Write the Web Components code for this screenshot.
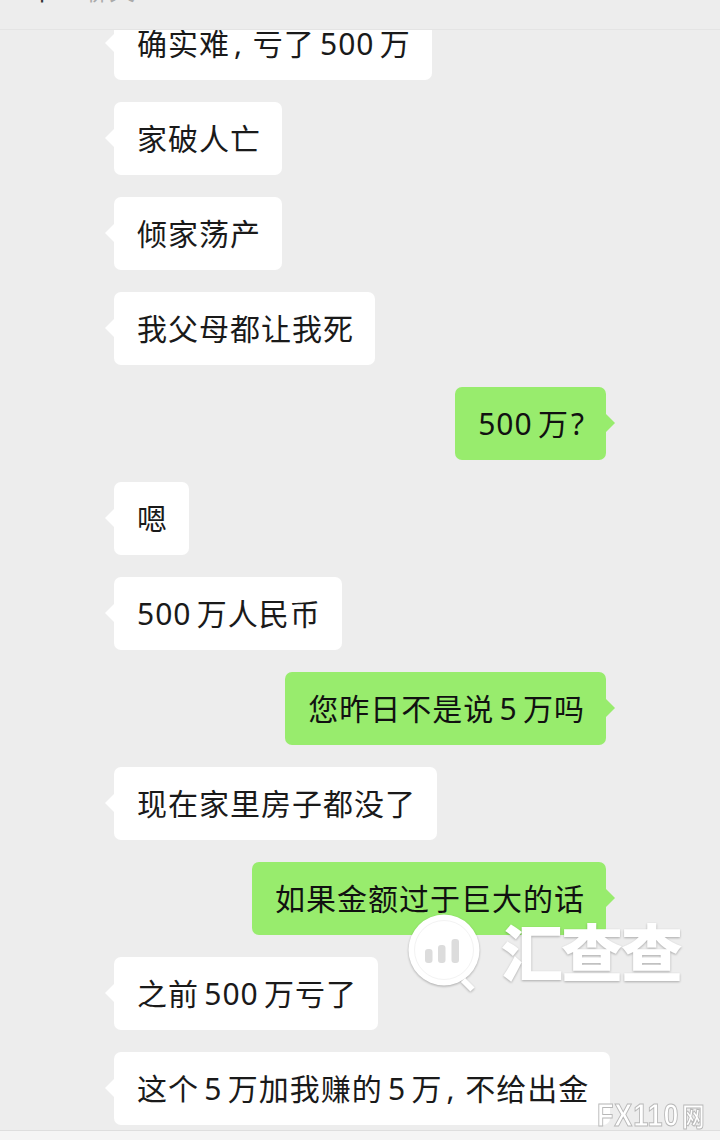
<!DOCTYPE html>
<html lang="zh">
<head>
<meta charset="utf-8">
<title>chat</title>
<style>
    html, body { margin: 0; padding: 0; background: #ededed; }
    body { width: 720px; height: 1140px; overflow: hidden; position: relative; font-family: 'Noto Sans', 'Noto Sans CJK SC', sans-serif; }
    .comma { margin: 0 4.4px 0 4px; }
    .ask { margin-left: 2px; }
</style>
</head>
<body>
<chat-page>
    <chat-header slot="header"></chat-header>
    <chat-bubble>确实难<span class="comma">,</span> 亏了 500 万</chat-bubble>
    <chat-bubble>家破人亡</chat-bubble>
    <chat-bubble>倾家荡产</chat-bubble>
    <chat-bubble>我父母都让我死</chat-bubble>
    <chat-bubble mine>500 万<span class="ask">?</span></chat-bubble>
    <chat-bubble>嗯</chat-bubble>
    <chat-bubble>500 万人民币</chat-bubble>
    <chat-bubble mine>您昨日不是说 5 万吗</chat-bubble>
    <chat-bubble>现在家里房子都没了</chat-bubble>
    <chat-bubble mine>如果金额过于巨大的话</chat-bubble>
    <chat-bubble>之前 500 万亏了</chat-bubble>
    <chat-bubble>这个 5 万加我赚的 5 万<span class="comma">,</span> 不给出金</chat-bubble>
</chat-page>
<logo-watermark></logo-watermark>
<fx-mark></fx-mark>
<script>
class ChatPage extends HTMLElement {
    constructor() {
        super();
        this.attachShadow({ mode: 'open' });
        this.shadowRoot.innerHTML = `
            <style>
                :host { display: flex; flex-direction: column; height: 1140px; }
                .list {
                    flex: 1;
                    min-height: 0;
                    overflow: hidden;
                }
                .inner {
                    display: flex;
                    flex-direction: column;
                    gap: 22px;
                    margin-top: -23px;
                }
                .foot {
                    height: 9px;
                    flex: none;
                    background: #f5f5f5;
                    border-top: 1px solid #dedede;
                }
            </style>
            <slot name="header"></slot>
            <div class="list"><div class="inner"><slot></slot></div></div>
            <div class="foot"></div>
        `;
    }
}

class ChatHeader extends HTMLElement {
    constructor() {
        super();
        this.attachShadow({ mode: 'open' });
        this.shadowRoot.innerHTML = `
            <style>
                :host {
                    display: block;
                    flex: none;
                    height: 29px;
                    border-bottom: 1px solid #e4e4e4;
                    overflow: hidden;
                }
                .title {
                    display: flex;
                    gap: 28px;
                    margin: -24px 0 0 29px;
                    font: 26px/26px 'Noto Sans CJK SC', sans-serif;
                    color: #aaa;
                }
                .back { color: #333; }
            </style>
            <div class="title"><span class="back">十</span><span>聊天</span></div>
        `;
    }
}

class ChatBubble extends HTMLElement {
    constructor() {
        super();
        this.attachShadow({ mode: 'open' });
        this.shadowRoot.innerHTML = `
            <style>
                :host {
                    display: flex;
                    padding: 0 111px 0 114px;
                    justify-content: flex-start;
                }
                :host([mine]) { justify-content: flex-end; padding-right: 114px; }
                .bubble {
                    position: relative;
                    height: 73px;
                    box-sizing: border-box;
                    padding: 0 21px 0 23px;
                    display: flex;
                    align-items: center;
                    background: #fff;
                    color: #1a1a1a;
                    border-radius: 7px;
                    font: 30px/1 'Noto Sans', 'Noto Sans CJK SC', sans-serif;
                    letter-spacing: 1px;
                    word-spacing: -3.5px;
                    white-space: nowrap;
                }
                :host([mine]) .bubble { background: #98ec6d; color: #111; }
                .bubble::before {
                    content: '';
                    position: absolute;
                    top: 27px;
                    left: -9px;
                    width: 0;
                    height: 0;
                    border-style: solid;
                    border-width: 9px 9px 9px 0;
                    border-color: transparent #fff transparent transparent;
                }
                :host([mine]) .bubble::before {
                    left: auto;
                    right: -9px;
                    border-width: 9px 0 9px 9px;
                    border-color: transparent transparent transparent #98ec6d;
                }
            </style>
            <div class="bubble"><div><slot></slot></div></div>
        `;
    }
}

class LogoWatermark extends HTMLElement {
    constructor() {
        super();
        this.attachShadow({ mode: 'open' });
        this.shadowRoot.innerHTML = `
            <style>
                :host {
                    position: absolute;
                    left: 408px;
                    top: 914px;
                    display: flex;
                    align-items: center;
                    gap: 17px;
                    filter: drop-shadow(0 1px 1px rgba(0,0,0,.28));
                }
                svg { display: block; flex: none; }
                .name {
                    font: 900 62px/1 'Noto Sans CJK SC', sans-serif;
                    color: #fff;
                    letter-spacing: -2px;
                    white-space: nowrap;
                    margin-top: -8px;
                }
            </style>
            <svg width="76" height="80" viewBox="0 0 76 80">
                <circle cx="36" cy="36" r="35.5" fill="#fff"/>
                <circle cx="36" cy="36" r="29.5" fill="none" stroke="#f3f3f3" stroke-width="1"/>
                <path d="M55 66l9.5 9.5" fill="none" stroke="#fff" stroke-width="6"/>
                <rect x="17" y="35" width="7.5" height="14" rx="3" fill="#dcdcdc"/>
                <rect x="30" y="31" width="7.5" height="18" rx="3" fill="#dcdcdc"/>
                <rect x="43.5" y="25" width="7.5" height="24" rx="3" fill="#dcdcdc"/>
            </svg>
            <span class="name">汇查查</span>
        `;
    }
}

class FxMark extends HTMLElement {
    constructor() {
        super();
        this.attachShadow({ mode: 'open' });
        this.shadowRoot.innerHTML = `
            <style>
                :host {
                    position: absolute;
                    left: 597px;
                    top: 1101px;
                    display: block;
                    white-space: nowrap;
                    transform: scaleX(.87);
                    transform-origin: left top;
                    font: 700 31px/30px 'Liberation Sans', 'Noto Sans CJK SC', sans-serif;
                    color: #fff;
                    -webkit-text-stroke: 1px #b8b8b8;
                    letter-spacing: 1px;
                }
                .net { font-size: 26px; margin-left: 3px; }
            </style>
            <span>FX110</span><span class="net">网</span>
        `;
    }
}

customElements.define('chat-page', ChatPage);
customElements.define('chat-header', ChatHeader);
customElements.define('chat-bubble', ChatBubble);
customElements.define('logo-watermark', LogoWatermark);
customElements.define('fx-mark', FxMark);
</script>
</body>
</html>
